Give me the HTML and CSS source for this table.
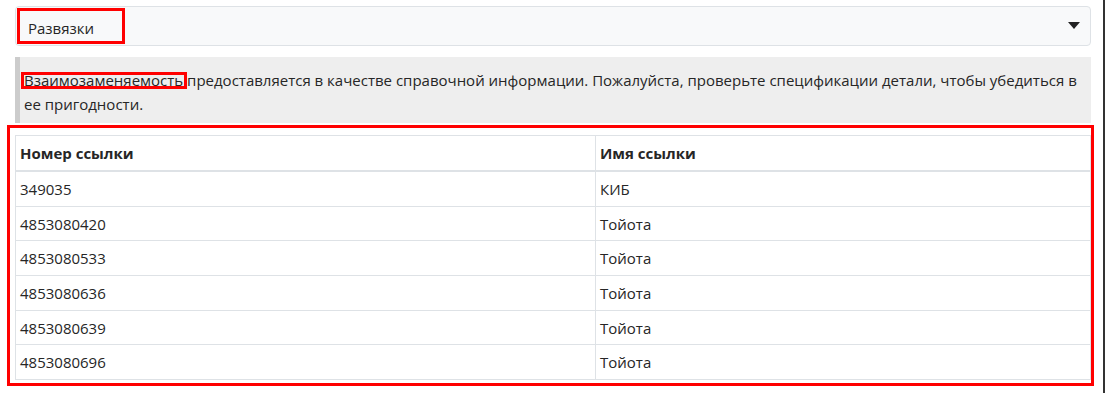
FILE: index.html
```html
<!DOCTYPE html>
<html lang="ru">
<head>
<meta charset="utf-8">
<link rel="stylesheet" href="styles.css">
</head>
<body>
<div class="page">
  <div class="select">
    <span class="select-label">Развязки</span>
    <svg class="caret" width="12" height="7" viewBox="0 0 12 7"><path d="M0 0 H12 L6 7 Z" fill="#222"/></svg>
    <span class="mark mark-select"></span>
  </div>
  <div class="notice">
    <p><span class="hl">Взаимозаменяемость <span class="mark mark-word"></span></span>предоставляется в качестве справочной информации. Пожалуйста, проверьте спецификации детали, чтобы убедиться в ее пригодности.</p>
  </div>
  <div class="table-wrap">
    <span class="mark mark-table"></span>
    <table class="refs">
      <thead>
        <tr><th>Номер ссылки</th><th>Имя ссылки</th></tr>
      </thead>
      <tbody>
        <tr><td>349035</td><td>КИБ</td></tr>
        <tr><td>4853080420</td><td>Тойота</td></tr>
        <tr><td>4853080533</td><td>Тойота</td></tr>
        <tr><td>4853080636</td><td>Тойота</td></tr>
        <tr><td>4853080639</td><td>Тойота</td></tr>
        <tr><td>4853080696</td><td>Тойота</td></tr>
      </tbody>
    </table>
  </div>
</div>
</body>
</html>
```
FILE: styles.css
```css
html, body {
  margin: 0;
  padding: 0;
  background: #fff;
}
body {
  font-family: "Open Sans", "Liberation Sans", sans-serif;
  font-size: 15px;
  color: #262626;
}
.page {
  width: 1105px;
  min-height: 393px;
  border-right: 2px solid #333;
  padding: 6px 0 0 15px;
  box-sizing: border-box;
}
.select {
  position: relative;
  width: 1076px;
  height: 40px;
  box-sizing: border-box;
  border: 1px solid #dee2e6;
  border-radius: 4px;
  background: #f8f9fa;
  display: flex;
  align-items: center;
  justify-content: space-between;
  padding: 3px 10px 0 12px;
}
.caret {
  margin-top: -4px;
}
.mark {
  position: absolute;
  border: 3px solid #ff0000;
  box-sizing: border-box;
  pointer-events: none;
}
.mark-select {
  left: 1px;
  top: 1px;
  width: 108px;
  height: 36px;
}
.notice {
  margin-top: 11px;
  width: 1076px;
  box-sizing: border-box;
  background: #eeeeee;
  border-left: 5px solid #cccccc;
  padding: 11px 4px 7px 4px;
}
.notice p {
  margin: 0;
  line-height: 24px;
}
.hl {
  position: relative;
}
.mark-word {
  left: -3px;
  top: 2px;
  right: 0;
  bottom: 1px;
  border-width: 3px;
}
.table-wrap {
  position: relative;
  margin-top: 12px;
  width: 1076px;
}
.mark-table {
  left: -8px;
  top: -10px;
  width: 1087px;
  height: 261px;
}
.refs {
  width: 1076px;
  border-collapse: collapse;
  table-layout: fixed;
}
.refs th, .refs td {
  border: 1px solid #dee2e6;
  text-align: left;
  padding: 0 4px;
}
.refs td {
  height: 33.7px;
}
.refs th {
  font-weight: 700;
  height: 34px;
  border-bottom: 2px solid #dee2e6;
}
.refs th:first-child, .refs td:first-child {
  width: 571px;
}
```
